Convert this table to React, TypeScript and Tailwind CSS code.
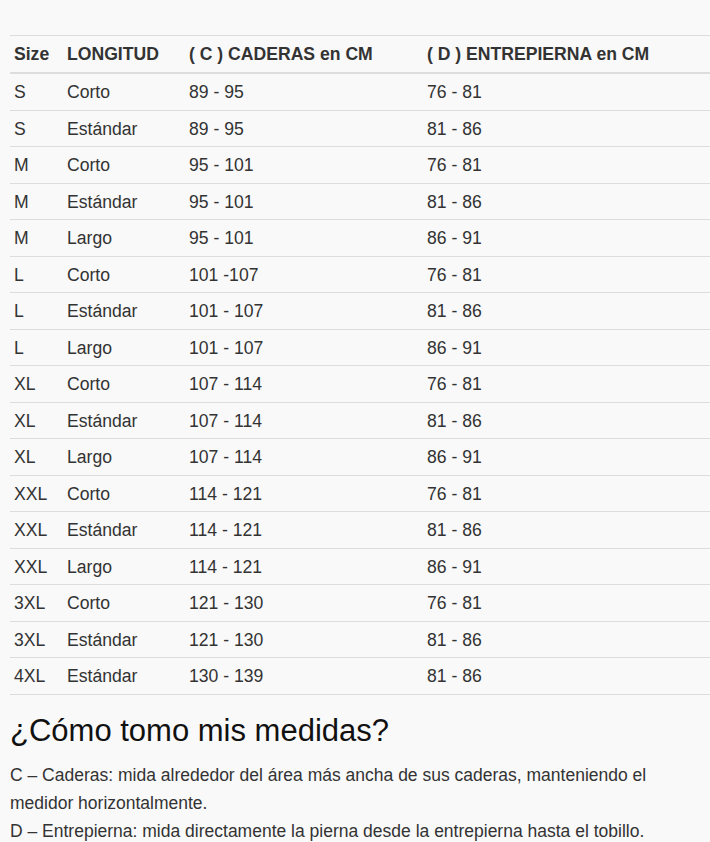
import React from "react";

const rows: [string, string, string, string][] = [
  ["S", "Corto", "89 - 95", "76 - 81"],
  ["S", "Estándar", "89 - 95", "81 - 86"],
  ["M", "Corto", "95 - 101", "76 - 81"],
  ["M", "Estándar", "95 - 101", "81 - 86"],
  ["M", "Largo", "95 - 101", "86 - 91"],
  ["L", "Corto", "101 -107", "76 - 81"],
  ["L", "Estándar", "101 - 107", "81 - 86"],
  ["L", "Largo", "101 - 107", "86 - 91"],
  ["XL", "Corto", "107 - 114", "76 - 81"],
  ["XL", "Estándar", "107 - 114", "81 - 86"],
  ["XL", "Largo", "107 - 114", "86 - 91"],
  ["XXL", "Corto", "114 - 121", "76 - 81"],
  ["XXL", "Estándar", "114 - 121", "81 - 86"],
  ["XXL", "Largo", "114 - 121", "86 - 91"],
  ["3XL", "Corto", "121 - 130", "76 - 81"],
  ["3XL", "Estándar", "121 - 130", "81 - 86"],
  ["4XL", "Estándar", "130 - 139", "81 - 86"],
];

export default function App() {
  return (
    <div
      className="min-h-[842px] w-[710px] overflow-hidden bg-[#f9f9f9] pl-[10px] pt-[35px] text-[#333]"
      style={{ fontFamily: '"Liberation Sans", Arial, sans-serif' }}
    >
      <table className="w-[760px] border-collapse text-[17.6px]">
        <colgroup>
          <col className="w-[53px]" />
          <col className="w-[122px]" />
          <col className="w-[238px]" />
          <col />
        </colgroup>
        <thead>
          <tr className="border-t border-[#ddd] border-b-2 border-b-[#ddd]">
            <th className="px-[4px] py-[7px] text-left font-bold leading-[22px]">Size</th>
            <th className="px-[4px] py-[7px] text-left font-bold leading-[22px]">LONGITUD</th>
            <th className="px-[4px] py-[7px] text-left font-bold leading-[22px]">( C ) CADERAS en CM</th>
            <th className="px-[4px] py-[7px] text-left font-bold leading-[22px]">( D ) ENTREPIERNA en CM</th>
          </tr>
        </thead>
        <tbody>
          {rows.map((r, i) => (
            <tr key={i} className="border-b border-[#ddd]">
              {r.map((c, j) => (
                <td key={j} className="px-[4px] pt-[7px] pb-[5px] leading-[23.5px]">
                  {c}
                </td>
              ))}
            </tr>
          ))}
        </tbody>
      </table>
      <h2 className="mt-[18px] text-[31px] font-normal leading-[36px] text-[#111]">
        ¿Cómo tomo mis medidas?
      </h2>
      <p className="mt-[12px] text-[17.5px] leading-[28px] text-[#333]">
        C – Caderas: mida alrededor del área más ancha de sus caderas, manteniendo el
        <br />
        medidor horizontalmente.
        <br />
        D – Entrepierna: mida directamente la pierna desde la entrepierna hasta el tobillo.
      </p>
    </div>
  );
}
